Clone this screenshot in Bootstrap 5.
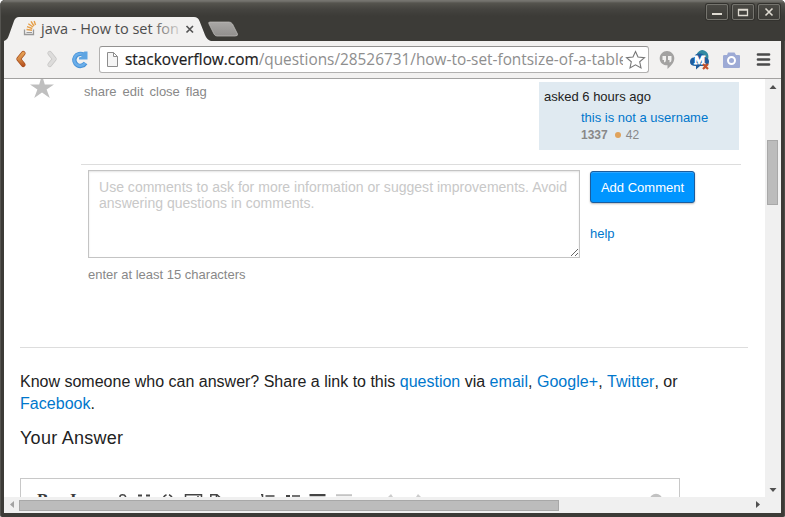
<!DOCTYPE html>
<html lang="en">
<head>
<meta charset="utf-8">
<title>java - How to set fontsize of a table</title>
<link href="https://cdn.jsdelivr.net/npm/bootstrap@5.3.0/dist/css/bootstrap.min.css" rel="stylesheet">
<style>
html,body{height:517px;overflow:hidden}
body{font-family:"Liberation Sans",Arial,sans-serif;font-size:13px;line-height:16px;color:#222;background:#fff}
a{color:#07c;text-decoration:none}
.win{width:785px;height:517px;padding:0 4px 4px 3px;background:#3c3b37;border-radius:5px 5px 2px 2px;border-left:1px solid #555450;box-shadow:inset 0 1px #75746f,inset -1px 0 #4c4b46}
.titlebar{height:41px;margin:0 -4px 0 -3px;padding:0 5px 0 3px;background:linear-gradient(#75746f 0 1px,#55544e 3px,#454440 9px,#3c3b37 16px);border-radius:5px 5px 0 0}
.tabs{width:240px;height:41px}
.wbtns{gap:4px;padding-top:4px}
.ubu{font-family:"Open Sans","Noto Sans",sans-serif}
.wbtn{width:22px;height:16px;border:1px solid #75746e;border-radius:2px;background:linear-gradient(#4a4944,#3d3c38);box-shadow:0 0 0 1px #33322e}
.wbtn svg,.tool svg{display:block}
.tool{height:38px;background:#f2f1f0;border-bottom:1px solid #a3a2a1}
.addr{width:550px;height:27px;margin-left:11px;background:#fff;border:1px solid #b2b1b0;border-top-color:#939291;border-radius:3px}
.view{height:418px;width:761px}
.vbar{width:16px;background:#f0f0f0}
.hbar{height:16px;background:#f0f0f0}
.vthumb{width:11px;height:65px;background:#bcbcbc;border:1px solid #a8a8a8;margin:47px auto 0 2px}
.hthumb{width:540px;height:11px;background:#bcbcbc;border:1px solid #a8a8a8;margin-left:2px}
.post{height:85px;padding-left:25px}
.menu{margin:5px 0 0 29px;gap:6px;color:#888}
.owner{width:200px;height:68px;margin:3px 26px 0 auto;padding:7px 5px;background:#e0eaf1}
.owner .who{padding-left:37px;line-height:17px;margin-top:4px}
.rep{padding-left:37px;font-size:12px;line-height:18px;color:#888}
.dot{width:6px;height:6px;border-radius:50%;background:#e0a35c;margin:0 5px 0 7px}
.comment{margin-left:77px;width:660px;border-top:1px solid #ddd;padding:5px 0 0 7px;height:183px}
.cbox{width:492px;height:88px;border:1px solid #c4c4c4;border-radius:0;padding:8px 10px;resize:none;font-size:14px;letter-spacing:.02px;line-height:16px;box-shadow:inset 0 1px 2px #e4e4e4}
.cbox,.cbox:focus{color:#222;background:#fff}
.cbox::placeholder{color:#c8c8c8}
.grip{position:absolute;right:1px;bottom:1px}
.side{margin-left:10px;gap:23px}
.add{width:105px;height:32px;padding:2px 0 0;margin-top:1px;font-size:13px;line-height:16px;color:#fff;background:#0095ff;border:1px solid #1c5c9c;border-radius:3px;box-shadow:0 1px 2px #bbb,inset 0 1px #2ea6ff}
.hint{color:#888;margin-top:9px}
.answers{margin:0 17px 0 16px;border-top:1px solid #ddd;padding-top:23px}
.share{font-size:16px;line-height:22px;margin:0;width:680px}
.share a + a{letter-spacing:.04px}
h2.ya{font-size:18px;line-height:24px;margin:11px 0 28px;font-weight:400;letter-spacing:.27px}
.editor{width:660px;height:40px;border:1px solid #c8c8c8}
.editor svg{display:block}
</style>
<script src="https://cdn.jsdelivr.net/npm/bootstrap@5.3.0/dist/js/bootstrap.bundle.min.js"></script>
</head>
<body>
<div class="win d-flex flex-column overflow-hidden">
  <header class="titlebar d-flex justify-content-between flex-shrink-0">
    <svg class="tabs" viewBox="4 0 240 41">
      <defs><linearGradient id="fade" gradientUnits="userSpaceOnUse" x1="150" x2="181" y1="0" y2="0"><stop stop-color="#4c4c4c"/><stop offset="1" stop-color="#4c4c4c" stop-opacity=".15"/></linearGradient>
      <linearGradient id="nt" x2="0" y2="1"><stop stop-color="#aaa8a6"/><stop offset="1" stop-color="#918f8d"/></linearGradient></defs>
      <path d="M4 41C7 40 8 38 9 35L14 21Q15.500 17 19 17H194Q198 17 199.500 21L205 35Q207 40 211 41Z" fill="#f2f1f0"/>
      <path d="M210 22H229Q231 22 232.500 24L237.500 34Q238 36 235 36H217Q215 36 214 34L209 24Q208 22 210 22Z" fill="url(#nt)" stroke="#c0bebb" stroke-width=".7"/>
      <path d="M24.500 29.500V34.500H33.500V29.500" fill="none" stroke="#989898" stroke-width="1.300"/>
      <path d="M26.500 32.500H32" stroke="#999" stroke-width="1.200"/>
      <path d="M26.500 29.500L32 30.200M27 26.600L32.300 28.500M28.300 23.700L33 27M31 21.300L34 26M34.200 21L35.500 25" stroke="#e5a04b" stroke-width="1.400"/>
      <text class="ubu" x="41" y="34" font-size="15" textLength="138" lengthAdjust="spacingAndGlyphs" fill="url(#fade)">java - How to set fon</text>
      <path d="M186.500 26L193 32.500M193 26L186.500 32.500" stroke="#555" stroke-width="1.700"/>
    </svg>
    <div class="wbtns d-flex">
      <div class="wbtn"><svg width="20" height="14"><path d="M5 9H15" stroke="#dfdbd2" stroke-width="2"/></svg></div>
      <div class="wbtn"><svg width="20" height="14"><path d="M5.500 4.500H14.500V10.500H5.500ZM5 5H15" fill="none" stroke="#dfdbd2" stroke-width="1.300"/></svg></div>
      <div class="wbtn"><svg width="20" height="14"><path d="M6.500 3.500L13.500 10.500M13.500 3.500L6.500 10.500" stroke="#dfdbd2" stroke-width="1.600"/></svg></div>
    </div>
  </header>

  <nav class="tool d-flex align-items-center flex-shrink-0">
    <svg width="84" height="37" viewBox="4 41 84 37">
      <defs><linearGradient id="or" gradientUnits="userSpaceOnUse" x1="0" x2="0" y1="51" y2="67"><stop stop-color="#e9a557"/><stop offset=".5" stop-color="#d58a45"/><stop offset="1" stop-color="#b24718"/></linearGradient></defs>
      <g fill="none" stroke-linecap="round" stroke-linejoin="round">
        <path d="M23.300 53.300L18.600 59L23.300 64.800" stroke="#a8501f" stroke-width="4.600"/>
        <path d="M23.300 53.300L18.600 59L23.300 64.800" stroke="url(#or)" stroke-width="3.200"/>
        <path d="M49.700 53.300L54.400 59L49.700 64.800" stroke="#c6c5c4" stroke-width="4.600"/>
        <path d="M49.700 53.300L54.400 59L49.700 64.800" stroke="#dddcdb" stroke-width="3.200"/>
      </g>
      <path d="M85.500 63A6 6 0 1 1 83.500 54.800" fill="none" stroke="#4a93d6" stroke-width="4.400"/>
      <path d="M85.200 63A6 6 0 1 1 83.500 54.800" fill="none" stroke="#6aaeea" stroke-width="2.400"/>
      <path d="M87.500 51.500V59.500H79V57.500L82 56.500L80.500 54.500L84.500 51.500Z" fill="#5fa5e2"/>
    </svg>
    <div class="addr d-flex align-items-center">
      <svg width="548" height="25" viewBox="100 47 548 25">
        <path d="M107.500 52.500H113.500L117.500 56.500V66.500H107.500ZM113.500 52.500V56.500H117.500" fill="#f5f5f5" stroke="#8d8d8d"/>
        <svg x="100" y="47" width="523" height="25" viewBox="100 47 523 25">
          <text class="ubu" x="125" y="65" font-size="17" textLength="502.500" lengthAdjust="spacingAndGlyphs" fill="#8e8e8e"><tspan fill="#202020" stroke="#202020" stroke-width=".2">stackoverflow.com</tspan>/questions/28526731/how-to-set-fontsize-of-a-table</text>
        </svg>
        <path d="M635.500 51.500L638 57L644.500 57.700L639.700 61.800L641 68L635.500 64.800L630 68L631.300 61.800L626.500 57.700L633 57Z" fill="#fff" stroke="#777" stroke-width="1.100"/>
      </svg>
    </div>
    <svg width="132" height="37" viewBox="649 41 132 37">
      <path d="M667 51C671 51 674.300 54.300 674.300 58.300C674.300 62.500 671 66 667.500 69V65.300C663 65.300 659.700 62.500 659.700 58.400C659.700 54.500 663 51 667 51Z" fill="#a3a2a1"/>
      <path d="M662.500 56H666V60Q666 62 664 62.500V60H662.500ZM668 56H671.500V60Q671.500 62 669.500 62.500V60H668Z" fill="#f2f1f0"/>
      <path d="M697 57A5.500 5.500 0 0 1 706 51.500Q709.500 54 708 60L698 62Z" fill="#328ba3"/>
      <path d="M690 62Q690 57.500 694 57.500Q695 53 700 53.500Q704 53.500 705 57.500Q709 58 709 61.500Q709 65.500 705 66H700L696 69.500V66Q690 66 690 62Z" fill="#1e5d9e"/>
      <text x="694" y="64" font-family="Liberation Serif,serif" font-weight="bold" font-size="12" fill="#fff" stroke="#fff" stroke-width=".8">M</text>
      <path d="M703 64L708 69M708 64L703 69" stroke="#c4502a" stroke-width="2.200"/>
      <path d="M724.500 55H727L728 52.500H734.500L736 55H739Q740 55 740 56V67Q740 68 739 68H724Q723 68 723 67V56Q723 55 724.500 55Z" fill="#9daad5"/>
      <circle cx="731.500" cy="60.500" r="3.500" fill="none" stroke="#fff" stroke-width="2"/>
      <path d="M758 54.500H769M758 59.500H769M758 64.500H769" stroke="#4a4a4a" stroke-width="2.700" stroke-linecap="round"/>
    </svg>
  </nav>

  <div class="d-flex flex-shrink-0">
    <main class="view bg-white overflow-hidden">
      <section class="post d-flex align-items-start">
        <svg width="26" height="22" viewBox="29 79 26 22"><path d="M42 75L44.800 84.500H54L46.600 89.500L49.800 98L42 92.600L34.200 98L37.400 89.500L30 84.500H39.200Z" fill="#bfbfbf"/></svg>
        <div class="menu d-flex"><span>share</span><span>edit</span><span>close</span><span>flag</span></div>
        <div class="owner">
          <div>asked 6 hours ago</div>
          <div class="who"><a href="#">this is not a username</a></div>
          <div class="rep d-flex align-items-center"><b>1337</b><span class="dot"></span><span>42</span></div>
        </div>
      </section>
      <section class="comment">
        <div class="d-flex align-items-start">
          <div class="position-relative">
            <textarea class="cbox form-control overflow-hidden" placeholder="Use comments to ask for more information or suggest improvements. Avoid answering questions in comments."></textarea>
            <svg class="grip" width="9" height="9"><path d="M1 8L8 1M5 8L8 5" stroke="#666"/></svg>
          </div>
          <div class="side d-flex flex-column">
            <button class="btn add">Add Comment</button>
            <a href="#" class="d-block">help</a>
          </div>
        </div>
        <div class="hint">enter at least 15 characters</div>
      </section>
      <section class="answers">
        <p class="share">Know someone who can answer? Share a link to this <a href="#">question</a> via <a href="#">email</a>, <a href="#">Google+</a>, <a href="#">Twitter</a>, or <a href="#">Facebook</a>.</p>
        <h2 class="ya">Your Answer</h2>
        <div class="editor">
          <svg width="658" height="38" viewBox="21 479 658 38">
            <g font-family="Liberation Serif,serif" font-weight="bold" font-size="17" fill="#3c3c3c"><text x="37" y="505">B</text><text x="70" y="505">I</text></g>
            <g fill="none" stroke="#444" stroke-width="1.500">
              <path d="M120 498V496.500Q120 494.700 122.500 494.700T125.500 496.500V498"/>
              <path d="M138 495.500H142M146 495.500H150" stroke-width="2"/>
              <path d="M166.500 494.700Q163.500 496 163 499M169 494.700Q172 496 172.500 499"/>
              <path d="M185.500 505V494.700H201.500V505M198 496V498"/>
              <path d="M210.800 505V494.700H217L220.500 498M216.500 495V498"/>
              <path d="M261 494.700H262.500V500M265.500 496H274.500M292 496H300"/>
              <path d="M286 496H290M309.500 495.200H325.500" stroke-width="2.200"/>
            </g>
            <path d="M336 495.200H352" stroke="#c4c4c4" stroke-width="2"/>
            <path d="M388 497L391 494L393 497ZM416 497L418 494L421 497Z" fill="#ccc"/>
            <circle cx="656" cy="500" r="6.300" fill="#c2c2c2"/>
          </svg>
        </div>
      </section>
    </main>
    <div class="vbar d-flex flex-column justify-content-between">
      <div>
        <svg class="d-block" width="16" height="14"><path d="M4.500 10L8 6L11.500 10Z" fill="#505050"/></svg>
        <div class="vthumb"></div>
      </div>
      <svg class="d-block" width="16" height="14"><path d="M4.500 5L8 9L11.500 5Z" fill="#505050"/></svg>
    </div>
  </div>
  <div class="hbar d-flex align-items-center flex-shrink-0">
    <svg width="13" height="16"><path d="M10 4L6 7.500L10 11Z" fill="#a3a3a3"/></svg>
    <div class="hthumb"></div>
    <svg class="ms-auto" width="30" height="16"><path d="M5 4L9 7.500L5 11Z" fill="#505050"/></svg>
  </div>
</div>
</body>
</html>
